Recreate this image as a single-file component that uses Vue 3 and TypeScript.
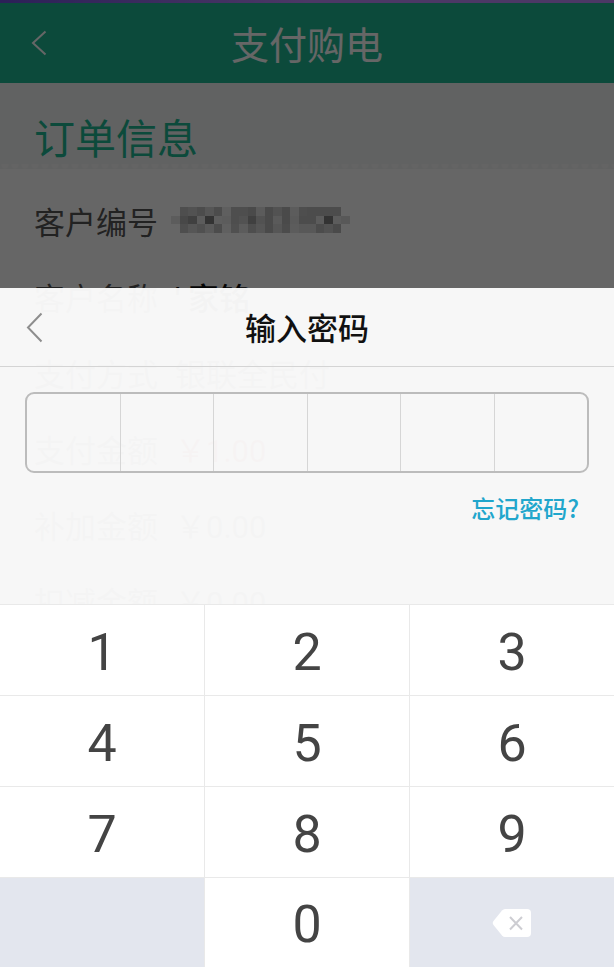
<script setup lang="ts">
import { ref } from 'vue'

interface OrderRow {
  label: string
  value: string
  tone?: 'strong' | 'danger'
}

const rows: OrderRow[] = [
  { label: '客户名称', value: "' 家铭", tone: 'strong' },
  { label: '支付方式', value: '银联全民付' },
  { label: '支付金额', value: '￥1.00', tone: 'danger' },
  { label: '补加金额', value: '￥0.00' },
  { label: '扣减金额', value: '￥0.00' },
]

// Darkness (percent) of every tile in the masked customer number
const mask: number[][] = [
  [0, 24, 20, 25, 16, 25, 7, 24, 24, 27, 11, 27, 20, 27, 10, 24, 25, 25, 25, 25, 0],
  [10, 29, 37, 10, 50, 8, 10, 24, 20, 37, 20, 27, 12, 27, 12, 25, 25, 10, 50, 10, 14],
  [0, 24, 16, 22, 12, 25, 6, 22, 10, 24, 16, 27, 16, 25, 10, 14, 14, 25, 20, 27, 0],
]

const digits = ['1', '2', '3', '4', '5', '6', '7', '8', '9']
const pin = ref<string[]>([])

function press(d: string) {
  if (pin.value.length < 6) pin.value.push(d)
}
function erase() {
  pin.value.pop()
}
</script>

<template>
  <div class="screen">
    <div class="page">
      <div class="status"></div>
      <header class="bar">
        <button class="back" type="button" aria-label="返回">
          <svg width="16" height="26" viewBox="0 0 16 26"><path d="M14.500 1.500 2 13l12.500 11.500" /></svg>
        </button>
        <h1>支付购电</h1>
      </header>
      <h2>订单信息</h2>
      <dl>
        <div class="row">
          <dt>客户编号</dt>
          <dd>
            <svg class="mask" viewBox="0 0 21 3" preserveAspectRatio="none" shape-rendering="crispEdges" aria-hidden="true">
              <template v-for="(line, y) in mask" :key="y">
                <rect v-for="(v, x) in line" :key="x" :x="x" :y="y" width="1" height="1" :fill-opacity="v / 100" />
              </template>
            </svg>
          </dd>
        </div>
        <div v-for="row in rows" :key="row.label" class="row">
          <dt>{{ row.label }}</dt>
          <dd :class="row.tone">{{ row.value }}</dd>
        </div>
      </dl>
    </div>
    <div class="shade"></div>

    <section class="sheet" aria-labelledby="sheet-title">
      <header class="sheet-bar">
        <button class="back" type="button" aria-label="关闭">
          <svg width="17" height="31" viewBox="0 0 17 31"><path d="M15.500 1.500 2 15.500l13.500 14" /></svg>
        </button>
        <h3 id="sheet-title">输入密码</h3>
      </header>
      <div class="entry">
        <div class="pin">
          <input v-for="n in 6" :key="n" type="password" readonly :value="pin[n - 1] ?? ''" :aria-label="`密码第${n}位`" />
        </div>
        <a class="forgot" href="#">忘记密码?</a>
      </div>
      <div class="keys">
        <button v-for="d in digits" :key="d" class="digit" type="button" @click="press(d)">{{ d }}</button>
        <span class="blank"></span>
        <button class="digit" type="button" @click="press('0')">0</button>
        <button class="erase" type="button" aria-label="删除" @click="erase">
          <svg width="40" height="30" viewBox="0 0 40 30">
            <path class="tag" d="M13 1h22q4 0 4 4v20q0 4-4 4H13q-1.500 0-3-1.500L1.500 17q-1.500-2 0-4L10 2.500Q11.500 1 13 1Z" />
            <path class="cross" d="m18 9 12 12.500M30 9 18 21.500" />
          </svg>
        </button>
      </div>
    </section>
  </div>
</template>

<style>
body {
  margin: 0;
}
</style>

<style scoped>
.screen {
  position: relative;
  min-height: 100vh;
  overflow: hidden;
  background: #fff;
  font-family: Roboto, 'Noto Sans CJK SC', sans-serif;
}
h1, h2, h3, dl, dd {
  margin: 0;
  font-weight: 400;
}
button {
  padding: 0;
  border: 0;
  background: none;
  font-family: inherit;
}
.status {
  height: 3px;
  background: linear-gradient(90deg, #6e50dc, #be8cff 50%);
}
.bar,
.sheet-bar {
  display: grid;
  grid-template-columns: 80px 1fr 80px;
  align-items: center;
  text-align: center;
}
.bar {
  height: 80px;
  background: #1fb995;
  color: #fff;
}
.back {
  display: flex;
  align-items: center;
  height: 100%;
  padding-left: 31px;
}
.back path {
  fill: none;
  stroke: currentColor;
  stroke-width: 2;
}
.bar .back {
  color: #fff;
}
h1 {
  padding-top: 6px;
  font-size: 38px;
  line-height: 56px;
}
h2 {
  padding: 27px 34px 0;
  height: 59px;
  background: radial-gradient(circle at 5px 1px, #fafafa 3px, transparent 4px) left bottom / 10px 5px repeat-x, #f3f5f4;
  color: #1fb995;
  font-size: 41px;
  line-height: 60px;
}
dl {
  padding: 13px 34px;
}
.row {
  display: flex;
  align-items: center;
  gap: 17px;
  height: 76px;
  color: #555;
  font-size: 31px;
}
.strong {
  color: #111;
  font-weight: 500;
}
.danger {
  color: #c33;
}
.mask {
  display: block;
  width: 179px;
  height: 26px;
  margin-left: -4px;
}
.shade {
  position: absolute;
  inset: 0;
  background: rgba(0, 0, 0, 0.6);
}
.sheet {
  position: absolute;
  right: 0;
  bottom: 0;
  left: 0;
  background: rgba(253, 253, 253, 0.96);
}
.sheet-bar {
  height: 78px;
  border-bottom: 1px solid #d4d4d4;
}
.sheet-bar .back {
  padding-left: 26px;
  color: #8e8e8e;
}
h3 {
  padding-top: 6px;
  color: #111;
  font-size: 31px;
  font-weight: 500;
  line-height: 46px;
}
.entry {
  display: flex;
  flex-direction: column;
  align-items: flex-end;
  gap: 17px;
  padding: 25px 25px 78px;
}
.pin {
  display: flex;
  box-sizing: border-box;
  width: 100%;
  height: 81px;
  border: 2px solid #bcbcbc;
  border-radius: 9px;
}
.pin input {
  flex: 1;
  min-width: 0;
  padding: 0;
  border: 0;
  background: none;
  font-size: 36px;
  text-align: center;
  outline: none;
}
.pin input + input {
  border-left: 1px solid #d6d6d6;
}
.forgot {
  margin-right: 10px;
  color: #21a6cc;
  font-family: 'Noto Sans CJK SC', sans-serif;
  font-size: 24px;
  font-weight: 500;
  line-height: 36px;
  text-decoration: none;
}
.keys {
  display: grid;
  grid-template-columns: repeat(3, 1fr);
  grid-template-rows: repeat(3, 90px) 89px;
  gap: 1px;
  border-top: 1px solid #e9e9e9;
  background: #e9e9e9;
}
.digit {
  padding-top: 4px;
  background: #fff;
  color: #444;
  font-size: 52px;
}
.blank,
.erase {
  background: #e3e6ee;
}
.erase svg {
  display: block;
  margin: 0 auto;
}
.tag {
  fill: #fff;
}
.cross {
  fill: none;
  stroke: #cdcdd2;
  stroke-width: 2;
}
</style>
